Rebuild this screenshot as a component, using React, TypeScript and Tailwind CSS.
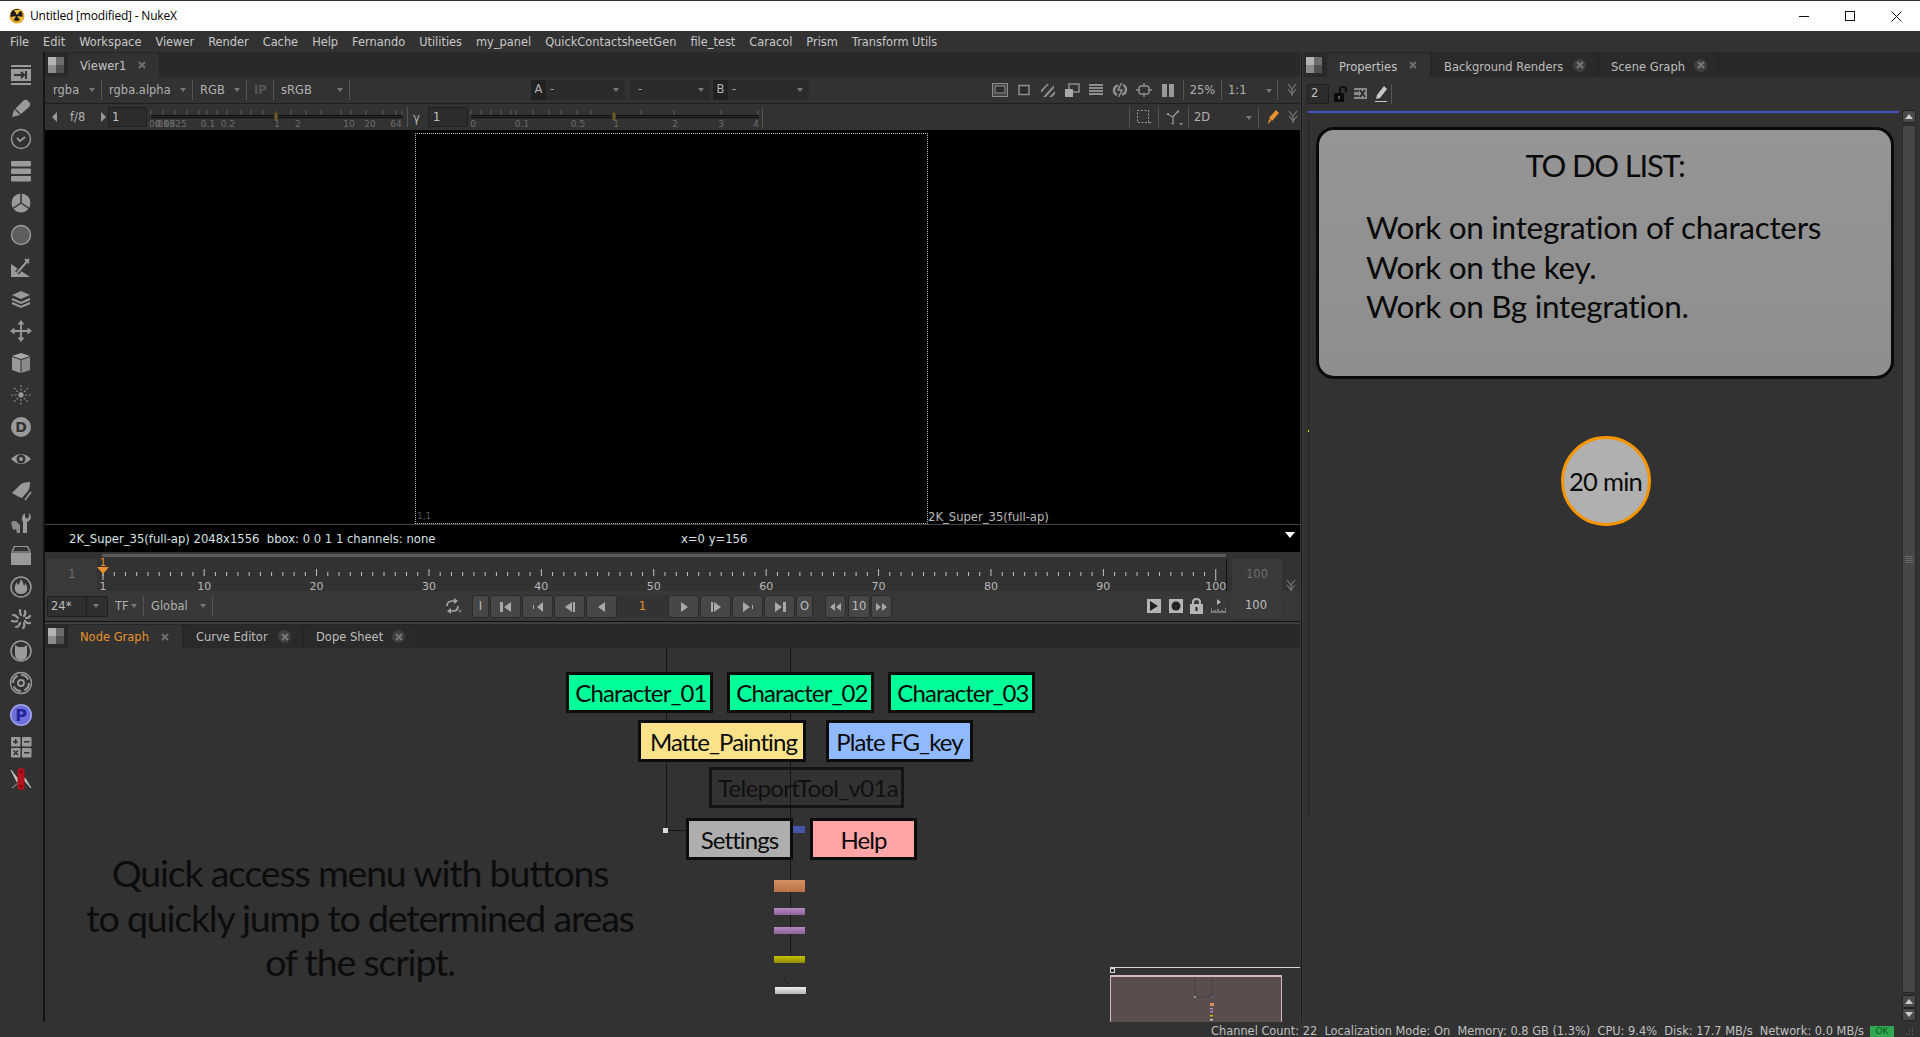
import React from "react";

const ui = "font-['DejaVu_Sans',sans-serif]";
const myriad = "font-['Lato',sans-serif]";

function Caret({ className = "" }: { className?: string }) {
  return <span className={"inline-block w-0 h-0 border-x-[3px] border-x-transparent border-t-[4px] border-t-[#777] " + className} />;
}

function PanelIcon() {
  return (
    <div className="grid grid-cols-2 w-[16px] h-[16px] shrink-0">
      <div className="bg-[#b4b4b4] row-span-1" />
      <div className="bg-[#6c6c6c]" />
      <div className="bg-[#8c8c8c]" />
      <div className="bg-[#505050]" />
    </div>
  );
}

function CloseBadge({ active }: { active?: boolean }) {
  return (
    <span className={"flex items-center justify-center w-[13px] h-[13px] rounded-full shrink-0 " + (active ? "" : "bg-[#3f3f3f]")}>
      <svg width="8" height="8" viewBox="0 0 8 8"><path d="M1 1l6 6M7 1L1 7" stroke={active ? "#6f6f6f" : "#777"} strokeWidth="2" /></svg>
    </span>
  );
}

function Tab({ label, active, orange, className = "", labelClass = "pt-[3px]" }: { label: string; active?: boolean; orange?: boolean; className?: string; labelClass?: string }) {
  return (
    <div className={"flex items-center justify-between h-full pl-[12px] pr-[11px] rounded-t-[3px] border border-b-0 border-[#262626] " + (active ? "bg-[#323232] " : "bg-[#2a2a2a] mt-[1px] ") + className}>
      <span className={(orange ? "text-[#e8912d]" : active ? "text-[#c4c4c4]" : "text-[#bdbdbd]") + " text-[11.5px] " + labelClass}>{label}</span>
      <CloseBadge active={active} />
    </div>
  );
}

function Seg({ label, className = "", caret = true, labelClass = "text-[#b0b0b0]" }: { label: string; className?: string; caret?: boolean; labelClass?: string }) {
  return (
    <div className={"flex items-center justify-between h-[20px] pl-[7px] pr-[6px] border-r border-[#555] shrink-0 " + className}>
      <span className={"text-[11.5px] pt-[1px] " + labelClass}>{label}</span>
      {caret && <Caret />}
    </div>
  );
}

function Chevrons() {
  return (
    <svg width="10" height="14" viewBox="0 0 10 14" className="shrink-0">
      <path d="M1 1l4 5 4-5M1 6l4 5 4-5M5 6v7" fill="none" stroke="#777" strokeWidth="1.2" />
    </svg>
  );
}

const g = "#9a9a9a";
const bg = "#323232";

const tools: React.ReactNode[] = [
  <g key="a"><rect x="1" y="1" width="20" height="2" fill={g} /><rect x="1" y="5" width="20" height="12" fill={g} /><rect x="1" y="19" width="20" height="2" fill={g} /><path d="M4 11h10M11 8l3 3-3 3M16 7v8" fill="none" stroke={bg} strokeWidth="2" /></g>,
  <g key="b"><path d="M2 21l2-7 9-9q2-2 4-1l3 3q1 2-1 4l-9 8z" fill={g} /><path d="M5 13l6 6" stroke={bg} strokeWidth="1.2" /></g>,
  <g key="c"><circle cx="11" cy="11" r="9.5" fill="none" stroke={g} strokeWidth="1.4" /><path d="M7 10l3 3 5-4" fill="none" stroke={g} strokeWidth="1.8" /></g>,
  <g key="d"><rect x="1" y="1" width="20" height="5.5" rx="1" fill={g} /><rect x="1" y="8.5" width="20" height="5.5" rx="1" fill={g} /><rect x="1" y="16" width="20" height="5.5" rx="1" fill={g} /></g>,
  <g key="e"><circle cx="11" cy="11" r="9.5" fill={g} /><path d="M11 1v10M11 11L2 17M11 11l9 6" stroke={bg} strokeWidth="1.5" /></g>,
  <g key="f"><circle cx="11" cy="11" r="9.5" fill="#5e5e5e" stroke={g} strokeWidth="1.4" /></g>,
  <g key="h"><path d="M1 8v13h19z" fill={g} /><path d="M7 17L18 4" stroke={bg} strokeWidth="5" /><path d="M7 17L19 3" stroke={g} strokeWidth="2" /><path d="M15 3l4 4" stroke={g} strokeWidth="2" /></g>,
  <g key="i"><path d="M11 3l9 4-9 4-9-4z" fill={g} /><path d="M2 11l9 4 9-4M2 15l9 4 9-4" fill="none" stroke={g} strokeWidth="2" /></g>,
  <g key="j"><path d="M11 3v16M3 11h16" stroke={g} strokeWidth="1.8" /><path d="M11 0l3.500 4.500h-7zM11 22l3.500-4.500h-7zM0 11l4.500-3.500v7zM22 11l-4.500-3.500v7z" fill={g} /></g>,
  <g key="k"><path d="M11 1l9 3-9 3-9-3z" fill="#aaa" /><path d="M2 5l8.5 3v13L2 18z" fill="#999" /><path d="M11.5 8L20 5v13l-8.500 3z" fill="#8a8a8a" /></g>,
  <g key="l"><path d="M11 1v20M1 11h20M4 4l14 14M18 4L4 18" stroke="#888" strokeWidth="1.2" strokeDasharray="2 1.500" /><circle cx="11" cy="11" r="2.500" fill="#999" /></g>,
  <g key="m"><circle cx="11" cy="11" r="10" fill={g} /><text x="11" y="16" textAnchor="middle" fontSize="14" fontWeight="700" fontFamily="DejaVu Sans" fill={bg}>D</text></g>,
  <g key="n"><path d="M1 11Q11 1 21 11Q11 21 1 11z" fill={g} /><circle cx="11" cy="11" r="4.500" fill={bg} /><circle cx="11" cy="11" r="2" fill={g} /></g>,
  <g key="o"><path d="M2 13L11 4q3-2 9-2q0 6-2 9l-6 7q-4-1-10-5z" fill={g} /><path d="M15 20l6-8" stroke={g} strokeWidth="1.500" /></g>,
  <g key="p"><path d="M15 1v4l2 2 2-2V1q3 3 1 7l-3 2v11h-4V10Q10 5 15 1z" fill={g} /><path d="M1 10q4-2 6 0l3 3v8H7l-1-4-3 1z" fill="#8a8a8a" /></g>,
  <g key="q"><path d="M4 2h14l3 6v13H1V8z" fill={g} /><path d="M1 8h20" stroke={bg} strokeWidth="0.8" /><path d="M5 3h12l2 4H3z" fill={bg} /></g>,
  <g key="r"><circle cx="11" cy="11" r="10" fill="none" stroke={g} strokeWidth="1.500" /><path d="M11 3q-1 4-3 6q-1-1-1-3q-3 4-2 8q1 4 6 4q5 0 6-4q1-3-2-7q0 3-1 3q-1-4-3-7z" fill={g} /></g>,
  <g key="s" fill="none" stroke={g} strokeWidth="2.200" strokeLinecap="round"><path d="M10 2q0 4 1 5M15 3q1 3-1 5M20 8q-1 2-4 2M20 15q-3 1-5-2M13 20q2-1 1-5M6 19q3 0 4-4M2 13q3 1 5 0M3 7q3 0 5 3" /></g>,
  <g key="t"><circle cx="11" cy="11" r="10" fill="none" stroke={g} strokeWidth="1.500" /><path d="M5 5l3 2h6l3-2v9q0 6-6 6t-6-6z" fill={g} /></g>,
  <g key="u" fill="none" stroke={g}><circle cx="11" cy="11" r="10.500" strokeWidth="1.300" /><circle cx="11" cy="11" r="8" strokeWidth="2" strokeDasharray="9 3.500" /><circle cx="11" cy="11" r="3" strokeWidth="1.800" /></g>,
  <g key="v"><circle cx="11" cy="11" r="11" fill="#a4a4f0" /><circle cx="11" cy="11" r="9.500" fill="#6f6fdc" /><text x="11" y="16.500" textAnchor="middle" fontSize="16" fontWeight="700" fontFamily="DejaVu Sans" fill="#24249a">P</text></g>,
  <g key="w"><rect x="1" y="1" width="9.500" height="9.500" rx="1" fill={g} /><rect x="12" y="1" width="9.500" height="9.500" rx="1" fill={g} /><rect x="1" y="12" width="9.500" height="9.500" rx="1" fill={g} /><rect x="12" y="12" width="9.500" height="9.500" rx="1" fill={g} /><path d="M5.700 3v5M3 5.700h5M14 5.700h5.500M3.500 14.500l4.500 4.500M8 14.500l-4.500 4.500M14 16.700h5.500" stroke={bg} strokeWidth="1.500" /></g>,
  <g key="x"><path d="M1 2l7 9-1 3zM21 20l-7-8 1-2zM2 20l6-5" stroke="#c8c8c8" fill="#c8c8c8" strokeWidth="0.800" /><rect x="7.500" y="0" width="7" height="22" rx="3.500" fill="#b3121d" /><circle cx="11" cy="4" r="1" fill="#500" /><circle cx="11" cy="18" r="1" fill="#500" /></g>,
];

function LeftToolbar() {
  return (
    <div className="w-[43px] shrink-0 bg-[#323232] flex flex-col items-center pt-[7px] pr-[1px]">
      {tools.map((t, i) => (
        <div key={i} className="h-[32px] flex items-center justify-center">
          <svg width="22" height="22" viewBox="0 0 22 22" className="overflow-visible">{t}</svg>
        </div>
      ))}
    </div>
  );
}

const vIcon = "#8e8e8e";
const viewerIcons: React.ReactNode[] = [
  <g key="1"><rect x="0.500" y="0.500" width="15" height="13" fill="#444" stroke={vIcon} /><rect x="3" y="3" width="10" height="7" fill="#2c2c2c" stroke={vIcon} /></g>,
  <g key="2"><rect x="3" y="2.500" width="10" height="9" fill="#2c2c2c" stroke={vIcon} strokeWidth="1.500" /></g>,
  <g key="3"><path d="M1 7l6-6h2L1 10zM3 14l11-12v3l-8 9zM9 14l6-6v3l-3 3z" fill={vIcon} /></g>,
  <g key="4"><rect x="5" y="1" width="10" height="8" fill="none" stroke={vIcon} strokeWidth="1.500" /><rect x="1" y="6" width="8" height="8" fill="#aaa" /></g>,
  <g key="5"><path d="M1 2h14M1 5h14M1 8h14M1 11h14" stroke={vIcon} strokeWidth="1.800" /></g>,
  <g key="6" fill="none" stroke="#8e8e8e" strokeWidth="2.400"><path d="M6 2.500A5 5 0 0 0 5 12" /><path d="M10 11.500A5 5 0 0 0 11 2" /><path d="M9.500 0L6 7h4l-3.500 7" strokeWidth="1.600" /></g>,
  <g key="7"><rect x="3" y="3" width="10" height="8" rx="2" fill="none" stroke={vIcon} strokeWidth="1.500" /><path d="M8 0v3M8 11v3M0 7h3M13 7h3" stroke={vIcon} strokeWidth="1.500" /></g>,
  <g key="8"><rect x="2" y="1" width="5" height="13" fill="#999" /><rect x="9" y="1" width="5" height="13" fill="#999" /></g>,
];

function SliderTicks({ w, thumb, labels, ticks }: { w: number; thumb: number; labels: [string, number][]; ticks: number[] }) {
  return (
    <svg width={w} height="26" className="shrink-0 block overflow-visible">
      {ticks.map((t) => <path key={t} d={`M${t} 6V11`} stroke="#5a5a5a" />)}
      <path d={`M0 11.500H${w}M0 13.500H${w}`} stroke="#0c0c0c" />
      <rect x={thumb - 2} y="8" width="4" height="9" fill="#6e5c2e" stroke="#2a2a1e" />
      {labels.map(([l, x]) => (
        <text key={l + x} x={x} y="23" fontSize="9" fontFamily="DejaVu Sans" fill="#6c6c6c" textAnchor="middle">{l}</text>
      ))}
    </svg>
  );
}

function ViewerToolbars() {
  return (
    <>
      <div className="h-[27px] flex items-center border-b border-[#1f1f1f] shrink-0">
        <Seg label="rgba" className="w-[57px] pl-[8px]" />
        <Seg label="rgba.alpha" className="w-[91px]" />
        <Seg label="RGB" className="w-[54px]" />
        <Seg label="IP" className="w-[27px]" caret={false} labelClass="text-[#555] font-bold" />
        <Seg label="sRGB" className="w-[76px]" />
        <div className="ml-[181px] w-[94px] h-[20px] bg-[#2b2b2b] flex items-center pr-[6px] shrink-0">
          <span className="w-[15px] h-full bg-[#212121] text-[#b5b5b5] text-[11.5px] flex items-center justify-center">A</span>
          <span className="ml-[4px] text-[#a5a5a5] text-[11.5px]">-</span>
          <Caret className="ml-auto" />
        </div>
        <div className="ml-[5px] w-[80px] h-[20px] bg-[#2b2b2b] flex items-center pl-[8px] pr-[6px] shrink-0">
          <span className="text-[#a5a5a5] text-[11.5px]">-</span>
          <Caret className="ml-auto" />
        </div>
        <div className="ml-[3px] w-[96px] h-[20px] bg-[#2b2b2b] flex items-center pr-[6px] shrink-0">
          <span className="w-[15px] h-full bg-[#212121] text-[#b5b5b5] text-[11.5px] flex items-center justify-center">B</span>
          <span className="ml-[4px] text-[#a5a5a5] text-[11.5px]">-</span>
          <Caret className="ml-auto" />
        </div>
        <div className="ml-[179px] flex items-center">
          {viewerIcons.map((ic, i) => (
            <div key={i} className="w-[24px] flex justify-center">
              <svg width="16" height="14" viewBox="0 0 16 14">{ic}</svg>
            </div>
          ))}
        </div>
        <div className="h-[20px] border-x border-[#555] ml-[3px] w-[39px] flex items-center justify-center text-[#b0b0b0] text-[11.5px] pt-[1px]">25%</div>
        <div className="w-[56px] pl-[6px] pr-[5px] h-[20px] border-r border-[#555] flex items-center justify-between text-[#b0b0b0] text-[11.5px] pt-[1px]">
          <span>1:1</span><Caret />
        </div>
        <div className="ml-[9px]"><Chevrons /></div>
      </div>
      <div className="h-[26px] flex items-center shrink-0">
        <span className="ml-[7px] w-0 h-0 border-y-[5px] border-y-transparent border-r-[5px] border-r-[#999]" />
        <span className="ml-[13px] text-[#b0b0b0] text-[11.5px] pt-[2px] w-[20px]">f/8</span>
        <span className="ml-[11px] w-0 h-0 border-y-[5px] border-y-transparent border-l-[5px] border-l-[#999]" />
        <div className="ml-[2px] w-[39px] h-[20px] rounded-[2px] bg-[#2c2c2c] border border-[#1f1f1f] text-[#c0c0c0] text-[11.5px] flex items-center pl-[3px] pt-[1px] shrink-0">1</div>
        <div className="ml-[4px]">
          <SliderTicks
            w={252}
            thumb={125}
            ticks={[0, 12, 24, 36, 48, 56, 66, 76, 90, 100, 112, 125, 140, 155, 170, 190, 200, 215, 232, 245, 251]}
            labels={[["0.01", 8], ["0.03", 14], ["0.0625", 20], ["0.1", 57], ["0.2", 77], ["1", 126], ["2", 147], ["10", 198], ["20", 219], ["64", 245]]}
          />
        </div>
        <div className="ml-[4px] h-[20px] border-l border-[#555] pl-[5px] text-[#b0b0b0] text-[11.5px] leading-[22px] w-[21px] shrink-0">γ</div>
        <div className="w-[40px] h-[20px] rounded-[2px] bg-[#2c2c2c] border border-[#1f1f1f] text-[#c0c0c0] text-[11.5px] flex items-center pl-[4px] pt-[1px] shrink-0">1</div>
        <div className="ml-[3px]">
          <SliderTicks
            w={288}
            thumb={143}
            ticks={[0, 10, 20, 30, 40, 45, 62, 78, 90, 106, 120, 143, 170, 203, 250, 287]}
            labels={[["0", 2], ["0.1", 51], ["0.5", 107], ["1", 145], ["2", 204], ["3", 250], ["4", 285]]}
          />
        </div>
        <div className="ml-[3px] h-[20px] border-l border-[#555]" />
        <div className="ml-[366px] h-[20px] w-[30px] border-x border-[#555] flex items-center justify-center">
          <svg width="16" height="16" viewBox="0 0 16 16"><rect x="1.500" y="1.500" width="11" height="12" fill="none" stroke="#9a9a9a" strokeDasharray="2 1.500" /><path d="M12 13h4l-2 2z" fill="#777" /></svg>
        </div>
        <div className="h-[20px] w-[30px] border-r border-[#555] flex items-center justify-center">
          <svg width="18" height="18" viewBox="0 0 18 18"><path d="M8 9L2 6M8 9l5-6M8 9v6" stroke="#9a9a9a" strokeWidth="1.200" fill="none" /><path d="M1 6l3-1v2zM14 2v3l-2-1zM8 17l-2-2h3zM14 15h4l-2 2z" fill="#9a9a9a" /></svg>
        </div>
        <div className="h-[20px] w-[70px] border-r border-[#555] pl-[5px] pr-[6px] pt-[1px] flex items-center justify-between text-[#b0b0b0] text-[11.5px]">
          <span>2D</span><Caret />
        </div>
        <div className="w-[28px] flex justify-center">
          <svg width="12" height="14" viewBox="0 0 12 14"><path d="M9 0l3 3-7 8-3-3zM2 9l2 2-3 3z" fill="#e8912d" /></svg>
        </div>
        <div className="ml-[1px]"><Chevrons /></div>
      </div>
    </>
  );
}

function Viewer() {
  return (
    <>
      <div className="h-[395px] bg-black border-b border-[#444] shrink-0 flex items-start overflow-hidden">
        <div className="ml-[370px] mt-[3px] w-[513px] h-[391px] border border-dotted border-[#bdbdbd] flex items-end shrink-0">
          <span className="ml-[1px] text-[#555] text-[9px] leading-[13px]">1,1</span>
        </div>
        <span className="self-end text-[#bcbcbc] text-[11.6px] leading-[14px] whitespace-nowrap">2K_Super_35(full-ap)</span>
      </div>
      <div className="h-[27px] bg-black shrink-0 flex items-center text-[11.6px] text-[#d6e2e2] whitespace-pre pt-[2px]">
        <span className="ml-[24px] w-[612px]">2K_Super_35(full-ap) 2048x1556  bbox: 0 0 1 1 channels: none</span>
        <span>x=0 y=156</span>
        <span className="ml-auto mr-[5px] mb-[9px] w-0 h-0 border-x-[5px] border-x-transparent border-t-[6px] border-t-white" />
      </div>
    </>
  );
}

const frames = Array.from({ length: 100 }, (_, i) => i + 1);
const fx = (f: number) => 6 + (f - 1) * 11.24;

function Ruler() {
  return (
    <svg width="1135" height="32" className="block shrink-0 overflow-visible">
      {frames.map((f) => (
        <path key={f} d={`M${fx(f)} ${f % 10 === 0 ? 10 : 13}V${f === 100 ? 22 : 17}`} stroke="#c4c4c4" />
      ))}
      {[10, 20, 30, 40, 50, 60, 70, 80, 90, 100].map((f) => (
        <text key={f} x={fx(f)} y="31" fontSize="11" fontFamily="DejaVu Sans" fill="#b8b8b8" textAnchor="middle">{f}</text>
      ))}
      <text x="6" y="31" fontSize="11" fontFamily="DejaVu Sans" fill="#b8b8b8" textAnchor="middle">1</text>
      <text x="6" y="7" fontSize="10" fontFamily="DejaVu Sans" fill="#e8912d" textAnchor="middle">1</text>
      <path d="M0 8h12l-6 7z" fill="#e8912d" />
      <path d="M6 15v6" stroke="#c4c4c4" />
      <path d="M1129.500 0V32" stroke="#111" />
    </svg>
  );
}

function TBtn({ className = "", children }: { className?: string; children?: React.ReactNode }) {
  return (
    <div className={"h-[23px] rounded-[3px] border border-[#2a2a2a] bg-[#474747] flex items-center justify-center text-[#bdbdbd] text-[11.5px] pt-[1px] shrink-0 " + className}>
      {children}
    </div>
  );
}

const tri = "#a8a8a8";
function Ico({ d, w = 14 }: { d: string; w?: number }) {
  return <svg width={w} height="12" viewBox={`0 0 ${w} 12`}><path d={d} fill={tri} /></svg>;
}

function Timeline() {
  return (
    <>
      <div className="h-[7px] bg-[#323232] shrink-0 pl-[57px] pt-[2px]">
        <div className="w-[1124px] h-[3px] bg-[#5c5c5c]" />
      </div>
      <div className="h-[32px] flex shrink-0 bg-[#323232]">
        <div className="ml-[2px] w-[50px] bg-[#3a3a3a] text-[#6f6f6f] text-[11.5px] flex items-center justify-center">1</div>
        <Ruler />
        <div className="w-[50px] bg-[#3a3a3a] text-[#6f6f6f] text-[11.5px] flex items-center justify-center">100</div>
        <div className="ml-[4px] self-end mb-[-2px]"><Chevrons /></div>
      </div>
      <div className="h-[30px] flex items-center shrink-0 bg-[#383838]">
        <div className="ml-[2px] w-[61px] h-[21px] bg-[#2f2f2f] border border-[#1f1f1f] rounded-[2px] flex items-center text-[11.5px] text-[#bdbdbd] shrink-0">
          <span className="w-[39px] pl-[3px] border-r border-[#1f1f1f] leading-[19px]">24*</span>
          <Caret className="ml-[6px]" />
        </div>
        <Seg label="TF" className="w-[36px] pl-[6px] pr-[6px] ml-0" />
        <Seg label="Global" className="w-[69px]" />
        <div className="ml-[231px] w-[18px] flex justify-center shrink-0">
          <svg width="18" height="16" viewBox="0 0 18 16"><path d="M3 8q0-5 6-5h2M14 8q0 5-5 5H6" fill="none" stroke="#a5a5a5" strokeWidth="1.700" /><path d="M10 0l4 3-4 3zM7 10l-4 3 4 3z" fill="#a5a5a5" /><path d="M14 12h4l-2 3z" fill="#777" /></svg>
        </div>
        <TBtn className="ml-[10px] w-[17px] text-[10px]">I</TBtn>
        <TBtn className="ml-[1px] w-[31px]"><Ico d="M1 1h3v10H1zM12 1v10L5 6z" /></TBtn>
        <TBtn className="ml-[1px] w-[31px]"><Ico d="M2 4h1v4H2zM12 1v10L6 6z" /></TBtn>
        <TBtn className="ml-[1px] w-[31px]"><Ico d="M9 1v10L2 6zM10 1h2v10h-2z" /></TBtn>
        <TBtn className="ml-[1px] w-[31px]"><Ico d="M10 1v10L3 6z" /></TBtn>
        <div className="w-[51px] h-[23px] bg-[#333] text-[#e8912d] text-[11.5px] pt-[1px] flex items-center justify-center shrink-0">1</div>
        <TBtn className="w-[31px]"><Ico d="M4 1v10l7-5z" /></TBtn>
        <TBtn className="ml-[1px] w-[31px]"><Ico d="M2 1h2v10H2zM5 1v10l7-5z" /></TBtn>
        <TBtn className="ml-[1px] w-[31px]"><Ico d="M2 1v10l7-5zM11 4h1v4h-1z" /></TBtn>
        <TBtn className="ml-[1px] w-[31px]"><Ico d="M2 1v10l7-5zM10 1h3v10h-3z" /></TBtn>
        <TBtn className="ml-[1px] w-[17px] text-[10px]">O</TBtn>
        <TBtn className="ml-[12px] w-[21px]"><Ico d="M6 2v8L1 6zM12 2v8L7 6z" w={13} /></TBtn>
        <TBtn className="ml-[2px] w-[22px] bg-[#3a3a3a]">10</TBtn>
        <TBtn className="ml-[1px] w-[21px]"><Ico d="M1 2v8l5-4zM7 2v8l5-4z" w={13} /></TBtn>
        <div className="ml-[255px] flex items-center shrink-0">
          <svg width="14" height="14" viewBox="0 0 14 14"><rect width="14" height="14" fill="#b5b5b5" /><path d="M3 2v10l8-5z" fill="#222" /></svg>
          <svg className="ml-[8px]" width="14" height="14" viewBox="0 0 14 14"><rect width="14" height="14" fill="#b5b5b5" /><circle cx="7" cy="7" r="4.500" fill="#222" /></svg>
          <svg className="ml-[7px]" width="14" height="16" viewBox="0 0 14 16"><rect y="6" width="13" height="10" fill="#b5b5b5" /><path d="M3 6V4q0-3 3.500-3T10 4v2" fill="none" stroke="#b5b5b5" strokeWidth="2" /><rect x="5.500" y="9" width="2" height="4" fill="#222" /></svg>
          <svg className="ml-[7px]" width="15" height="16" viewBox="0 0 15 16"><path d="M6 1l4 3-4 3z" fill="#b5b5b5" /><path d="M0 10v4h15v-4M4 13v-1M7 13v-2M11 13v-1" fill="none" stroke="#b5b5b5" /></svg>
        </div>
        <div className="ml-[5px] w-[50px] h-[24px] bg-[#3a3a3a] text-[#bdbdbd] text-[11.5px] flex items-center justify-center shrink-0">100</div>
      </div>
      <div className="h-[3px] bg-[#3e3e3e] border-t border-[#111] shrink-0" />
    </>
  );
}

function Node({ label, className }: { label: string; className: string }) {
  return (
    <div className={"absolute border-[3px] border-[#0c0c0c] flex items-center justify-center pt-[1px] text-[24px] tracking-[-0.9px] text-[#0a0a0a] " + myriad + " " + className}>
      {label}
    </div>
  );
}

function NodeGraph() {
  return (
    <div className="relative h-[374px] bg-[#323232] overflow-hidden shrink-0">
      <div className="absolute left-[621px] top-0 w-px h-[180px] bg-[#141414]" />
      <div className="absolute left-[745px] top-0 w-px h-[311px] bg-[#141414]" />
      <div className="absolute left-[623px] top-[182px] w-[18px] h-px bg-[#141414]" />
      <Node label="Character_01" className="left-[521px] top-[24px] w-[147px] h-[41px] pl-[3px] bg-[#00ff99]" />
      <Node label="Character_02" className="left-[682px] top-[24px] w-[147px] h-[41px] pl-[3px] bg-[#00ff99]" />
      <Node label="Character_03" className="left-[843px] top-[24px] w-[147px] h-[41px] pl-[3px] bg-[#00ff99]" />
      <Node label="Matte_Painting" className="left-[593px] top-[72px] w-[168px] h-[42px] pl-[3px] bg-[#fae28b]" />
      <Node label="Plate FG_key" className="left-[781px] top-[72px] w-[147px] h-[42px] bg-[#90b9ff]" />
      <div className={"absolute left-[664px] top-[119px] w-[195px] h-[41px] pl-[3px] border-[3px] border-[#141414] flex items-center justify-center pt-[1px] text-[24px] tracking-[-0.7px] text-[#101010] " + myriad}>TeleportTool_v01a</div>
      <Node label="Settings" className="left-[641px] top-[170px] w-[107px] h-[42px] bg-[#aeaeae]" />
      <Node label="Help" className="left-[765px] top-[170px] w-[107px] h-[42px] bg-[#ffa5a5]" />
      <div className="absolute left-[748px] top-[178px] w-[12px] h-[7px] bg-[#4455aa]" />
      <div className="absolute left-[618px] top-[180px] w-[5px] h-[5px] bg-[#d8d8d8]" />
      <div className="absolute left-[729px] top-[232px] w-[31px] h-[12px] bg-gradient-to-b from-[#d4905f] to-[#b87448]" />
      <div className="absolute left-[729px] top-[260px] w-[31px] h-[7px] bg-gradient-to-b from-[#b588c2] to-[#8c6498]" />
      <div className="absolute left-[729px] top-[279px] w-[31px] h-[7px] bg-gradient-to-b from-[#b588c2] to-[#8c6498]" />
      <div className="absolute left-[729px] top-[308px] w-[31px] h-[7px] bg-gradient-to-b from-[#c8c400] to-[#8e8c00]" />
      <div className="absolute left-[730px] top-[339px] w-[31px] h-[7px] bg-gradient-to-b from-[#eeeeee] to-[#b4b4b4]" />
      <svg className="absolute left-[735px] top-[326px]" width="12" height="14"><path d="M2 1l8 12" stroke="#141414" strokeDasharray="2 2" /></svg>
      <div className={"absolute left-[15px] top-[203px] w-[600px] text-center text-[37.5px] leading-[44.5px] tracking-[-1.2px] text-[#0c0c0c] " + myriad}>
        <div>Quick access menu with buttons</div>
        <div>to quickly jump to determined areas</div>
        <div>of the script.</div>
      </div>
      <div className="absolute left-[1065px] top-[319px] w-[190px] h-[55px] border-t border-[#d8d8d8]">
        <div className="absolute left-0 top-0 w-[5px] h-[5px] border border-[#d8d8d8]" />
        <div className="absolute left-0 top-[7px] w-[172px] h-[48px] bg-[#594d4d] border-x border-t-2 border-[#d8b8b8]">
          <svg width="170" height="46" className="block">
            <path d="M84 0v20M101 0v20M84 20h17" stroke="#444" fill="none" />
            <path d="M83 20h2" stroke="#ddd" />
            <path d="M100 20h3" stroke="#6a6ac0" />
            <rect x="99" y="26" width="4" height="3" fill="#d4905f" />
            <rect x="99" y="31" width="3" height="1.500" fill="#b588c2" />
            <rect x="99" y="34" width="3" height="1.500" fill="#b588c2" />
            <rect x="99" y="38" width="3" height="1.500" fill="#c8c400" />
            <rect x="99" y="42" width="3" height="1.500" fill="#ccc" />
          </svg>
        </div>
      </div>
    </div>
  );
}

function LeftColumn() {
  return (
    <div className="w-[1255px] shrink-0 flex flex-col">
      <div className="h-[25px] bg-[#292929] flex items-end shrink-0 pl-[3px]">
        <div className="self-center"><PanelIcon /></div>
        <Tab label="Viewer1" active className="ml-[3px] w-[93px]" labelClass="pt-[4px]" />
      </div>
      <ViewerToolbars />
      <Viewer />
      <Timeline />
      <div className="h-[24px] bg-[#292929] flex items-end shrink-0 pl-[3px]">
        <div className="self-center"><PanelIcon /></div>
        <Tab label="Node Graph" active orange className="ml-[3px] w-[116px]" />
        <Tab label="Curve Editor" className="w-[120px]" />
        <Tab label="Dope Sheet" className="w-[114px]" />
      </div>
      <NodeGraph />
    </div>
  );
}

function RightColumn() {
  return (
    <div className="flex-1 flex flex-col min-w-0">
      <div className="h-[25px] bg-[#292929] flex items-end shrink-0 pl-[3px]">
        <div className="self-center"><PanelIcon /></div>
        <Tab label="Properties" active className="ml-[4px] w-[105px]" labelClass="pt-[5px]" />
        <Tab label="Background Renders" className="w-[167px]" labelClass="pt-[5px]" />
        <Tab label="Scene Graph" className="w-[121px]" labelClass="pt-[5px]" />
      </div>
      <div className="h-[27px] flex items-center shrink-0 pl-[4px] pt-[6px]">
        <div className="w-[22px] h-[20px] rounded-[2px] bg-[#2c2c2c] border border-[#1f1f1f] text-[#c0c0c0] text-[11.5px] flex items-center pl-[3px]">2</div>
        <svg className="ml-[5px]" width="15" height="16" viewBox="0 0 15 16"><rect x="0" y="7" width="10" height="9" fill="#0c0c0c" /><path d="M6 7V4q0-3 3-3t3 3v2" fill="none" stroke="#0c0c0c" strokeWidth="2" /><path d="M5 10v3" stroke="#aaa" /></svg>
        <svg className="ml-[5px]" width="13" height="11" viewBox="0 0 13 11"><rect width="13" height="11" fill="#8a8a8a" /><path d="M0 3h5M0 8h5M6 2l5 7M11 2L6 9" stroke="#222" strokeWidth="1.500" /></svg>
        <svg className="ml-[8px]" width="13" height="18" viewBox="0 0 13 18"><path d="M2 10l7-9 3 3-7 9-4 1z" fill="#c8c8c8" /><path d="M0 16.500h12" stroke="#c8c8c8" /></svg>
        <div className="ml-[3px] h-[20px] border-l border-[#555]" />
      </div>
      <div className="flex-1 flex min-h-0">
        <div className="flex-1 pt-[7px] pl-[5px] pr-[3px]">
          <div className="h-[2px] bg-[#4156c4]" />
          <div className="h-[705px] border-l border-[#262626] relative flex flex-col">
            <div className="ml-[7px] mt-[14px] w-[578px] h-[252px] rounded-[18px] border-[3px] border-[#0a0a0a] bg-gradient-to-b from-[#959595] to-[#8e8e8e] text-[#0a0a0a] shrink-0 pt-[15px]">
              <div className={"text-center text-[31px] leading-[40px] tracking-[-1.2px] " + myriad}>TO DO LIST:</div>
              <div className={"pl-[47px] pt-[23px] text-[31.5px] leading-[39.5px] tracking-[-0.3px] " + myriad}>
                <div>Work on integration of characters</div>
                <div>Work on the key.</div>
                <div>Work on Bg integration.</div>
              </div>
            </div>
            <div className="self-center ml-[3px] mt-[57px] w-[90px] h-[90px] rounded-full border-[3px] border-[#f59600] bg-[#b0b0b0] flex items-center justify-center text-[#0a0a0a] shrink-0">
              <span className={"text-[25.5px] tracking-[-0.7px] " + myriad}>20 min</span>
            </div>
            <div className="absolute left-[-1px] top-[317px] w-px h-[2px] bg-[#d8d800]" />
          </div>
        </div>
        <div className="w-[14px] mr-[4px] shrink-0 flex flex-col">
          <div className="mt-[6px] h-[13px] rounded-[2px] bg-[#4a4a4a] border border-[#222] flex items-center justify-center">
            <span className="w-0 h-0 border-x-[4px] border-x-transparent border-b-[5px] border-b-[#ccc]" />
          </div>
          <div className="mt-[2px] flex-1 bg-[#474747] rounded-[2px] border border-[#2a2a2a] flex flex-col items-center justify-center gap-[1px]">
            <div className="w-[8px] h-px bg-[#6a6a6a]" />
            <div className="w-[8px] h-px bg-[#6a6a6a]" />
            <div className="w-[8px] h-px bg-[#6a6a6a]" />
            <div className="w-[8px] h-px bg-[#6a6a6a]" />
          </div>
          <div className="mt-[2px] h-[13px] rounded-[2px] bg-[#4a4a4a] border border-[#222] flex items-center justify-center">
            <span className="w-0 h-0 border-x-[4px] border-x-transparent border-b-[5px] border-b-[#ccc]" />
          </div>
          <div className="h-[13px] rounded-[2px] bg-[#4a4a4a] border border-[#222] flex items-center justify-center mb-[1px]">
            <span className="w-0 h-0 border-x-[4px] border-x-transparent border-t-[5px] border-t-[#ccc]" />
          </div>
        </div>
      </div>
    </div>
  );
}

function Logo() {
  return (
    <svg width="16" height="16" viewBox="0 0 16 16">
      <circle cx="8" cy="8" r="7.500" fill="#e8a32a" />
      <circle cx="7.500" cy="7" r="6" fill="#1d1d1d" />
      <path d="M8 7L5 2h7zM8 8l6 1-2 4zM7 8l-5 1 2 4z" fill="#eec23e" />
    </svg>
  );
}

export default function App() {
  return (
    <div className={"w-[1920px] h-[1037px] flex flex-col overflow-hidden bg-[#323232] " + ui}>
      <div className="h-[31px] shrink-0 bg-white border-t border-[#2f2f2f] flex items-center">
        <div className="ml-[9px]"><Logo /></div>
        <span className="ml-[5px] text-[12px] text-black font-['Open_Sans',sans-serif] tracking-[-0.2px]">Untitled [modified] - NukeX</span>
        <div className="ml-auto flex items-center mr-[1px]">
          <div className="w-[46px] flex justify-center"><svg width="10" height="10"><path d="M0 5.500h10" stroke="#111" /></svg></div>
          <div className="w-[46px] flex justify-center"><svg width="10" height="10"><rect x="0.500" y="0.500" width="9" height="9" fill="none" stroke="#111" /></svg></div>
          <div className="w-[46px] flex justify-center"><svg width="11" height="11"><path d="M0.500 0.500l10 10M10.500 0.500l-10 10" stroke="#111" /></svg></div>
        </div>
      </div>
      <div className="h-[21px] shrink-0 bg-[#323232] flex items-center gap-[14px] pl-[10px] pt-[3px] text-[11.4px] text-[#c8c8c8]">
        {["File", "Edit", "Workspace", "Viewer", "Render", "Cache", "Help", "Fernando", "Utilities", "my_panel", "QuickContactsheetGen", "file_test", "Caracol", "Prism", "Transform Utils"].map((m) => (
          <span key={m}>{m}</span>
        ))}
      </div>
      <div className="flex-1 flex min-h-0">
        <LeftToolbar />
        <div className="w-[2px] shrink-0 bg-[#161616]" />
        <LeftColumn />
        <div className="w-[3px] shrink-0 bg-[#1a1a1a] border-x border-[#3a3a3a]" />
        <RightColumn />
      </div>
      <div className="h-[15px] shrink-0 bg-[#323232] flex items-center justify-end text-[11.4px] text-[#c0c0c0] whitespace-pre overflow-hidden">
        <span className="pt-[5px]">Channel Count: 22  Localization Mode: On  Memory: 0.8 GB (1.3%)  CPU: 9.4%  Disk: 17.7 MB/s  Network: 0.0 MB/s</span>
        <span className="ml-[6px] w-[24px] h-[11px] mt-[4px] bg-[#2fa84f] text-[#0f5a22] text-[9px] leading-[11px] text-center">OK</span>
        <svg className="ml-[10px] mr-[6px] mt-[4px]" width="10" height="10" viewBox="0 0 10 10"><path d="M8 1h1M5 4h1M8 4h1M2 7h1M5 7h1M8 7h1" stroke="#777" /></svg>
      </div>
    </div>
  );
}
